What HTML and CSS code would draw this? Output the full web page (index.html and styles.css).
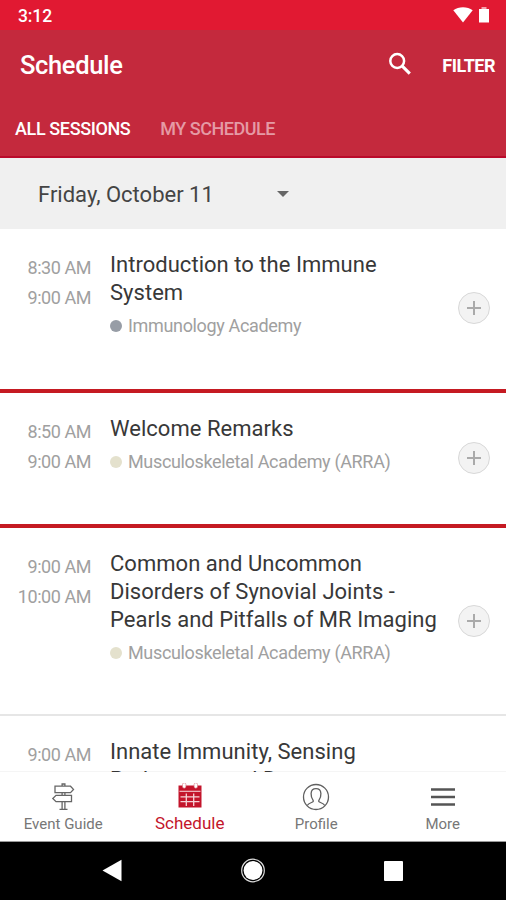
FILE: index.html
```html
<!DOCTYPE html>
<html lang="en">
<head>
<meta charset="utf-8">
<title>Schedule</title>
<link rel="stylesheet" href="styles.css">
</head>
<body>
<div class="status">
  <span class="clock">3:12</span>
  <svg class="wifi" width="20" height="16" viewBox="0 0 20 16"><path d="M.3 3.2C5.5-.8 14.5-.8 19.7 3.2L10 15.5z" fill="#fff"/></svg>
  <svg class="battery" width="10" height="16" viewBox="0 0 10 16"><path d="M2.500 0h5v2h-5z" fill="#f5a3ad"/><path d="M0 2h10v13.500H0z" fill="#fff"/></svg>
</div>
<header class="header">
  <div class="bar">
    <h1 class="heading">Schedule</h1>
    <svg class="search" width="24" height="24" viewBox="0 0 24 24"><circle cx="9.200" cy="9" r="6.900" fill="none" stroke="#fff" stroke-width="2.500"/><path d="M14 13.800l7.800 7.800" stroke="#fff" stroke-width="3.100"/></svg>
    <span class="filter">FILTER</span>
  </div>
  <div class="tabs"><span class="tab tab-on">ALL SESSIONS</span><span class="tab tab-off">MY SCHEDULE</span></div>
</header>
<div class="date"><span class="date-text">Friday, October 11</span><span class="caret"></span></div>
<main class="list">
  <section class="row row-a">
    <div class="times"><span>8:30 AM</span><span>9:00 AM</span></div>
    <div class="info"><h2>Introduction to the Immune<br>System</h2><p><i class="dot gray"></i><span>Immunology Academy</span></p></div>
    <span class="add"></span>
  </section>
  <section class="row row-b">
    <div class="times"><span>8:50 AM</span><span>9:00 AM</span></div>
    <div class="info"><h2>Welcome Remarks</h2><p><i class="dot"></i><span>Musculoskeletal Academy (ARRA)</span></p></div>
    <span class="add"></span>
  </section>
  <section class="row row-c">
    <div class="times"><span>9:00 AM</span><span>10:00 AM</span></div>
    <div class="info"><h2>Common and Uncommon<br>Disorders of Synovial Joints -<br>Pearls and Pitfalls of MR Imaging</h2><p><i class="dot"></i><span>Musculoskeletal Academy (ARRA)</span></p></div>
    <span class="add"></span>
  </section>
  <section class="row row-d">
    <div class="times"><span>9:00 AM</span></div>
    <div class="info"><h2>Innate Immunity, Sensing<br>Pathogens and D</h2></div>
  </section>
</main>
<nav class="nav">
  <div class="item">
    <svg width="28" height="28" viewBox="0 0 28 28" fill="none" stroke="#666" stroke-width="1.300"><path d="M6 3.200h15.500l3 3.200-3 3.200H6zM22.500 12.300H7L3.800 15.500l3.200 3.200h15.500zM13.100 3V1h2.800v2M13.100 9.600v2.700M15.900 9.600v2.700M13.100 18.700v7.500M15.900 18.700v7.500M10.500 26.400h8"/></svg>
    <span>Event Guide</span>
  </div>
  <div class="item active">
    <svg width="28" height="28" viewBox="0 0 28 28"><path d="M2.500 2.500h23v22h-23z" fill="#c3142b"/><path d="M3.500 8.300h21" stroke="#f4ccd1" stroke-width="1.100"/><path d="M4.500 13.900h19M4.500 18.700h19M10.300 10.500v12.500M17.700 10.500v12.500" stroke="#f6d3d8" stroke-width="1.300"/><path d="M6.500 1.500a1.700 1.700 0 0 1 3.400 0v2a1.700 1.700 0 0 1-3.400 0zM18.100 1.500a1.700 1.700 0 0 1 3.400 0v2a1.700 1.700 0 0 1-3.400 0z" fill="#fff" stroke="#dc7582" stroke-width=".6"/></svg>
    <span>Schedule</span>
  </div>
  <div class="item">
    <svg width="28" height="28" viewBox="0 0 28 28" fill="none" stroke="#606060" stroke-width="1.300"><circle cx="14" cy="14" r="12.500"/><path d="M5.200 22.500c1-1.800 2.300-2.300 4.300-3 1.600-.6 2.200-1.200 1.600-2.200C9.300 15 9 12.700 9.100 10.500 9.300 7.300 11 5.700 14 5.700s4.700 1.600 4.900 4.800c.1 2.200-.2 4.500-2 6.800-.6 1 0 1.600 1.600 2.200 2 .7 3.300 1.200 4.300 3"/></svg>
    <span>Profile</span>
  </div>
  <div class="item">
    <svg width="28" height="28" viewBox="0 0 28 28"><path d="M2 6.500h24M2 14h24M2 21.500h24" stroke="#555" stroke-width="2.500"/></svg>
    <span>More</span>
  </div>
</nav>
<div class="system">
  <svg width="506" height="58" viewBox="0 0 506 58"><path d="M102.500 28.500L121.500 17.800v21.400z" fill="#fff"/><circle cx="253" cy="28.500" r="11.300" fill="none" stroke="#ddd" stroke-width="1.200"/><circle cx="253" cy="28.500" r="9.400" fill="#fff"/><rect x="384" y="19" width="19" height="20" rx="1" fill="#fff"/></svg>
</div>
</body>
</html>
```
FILE: styles.css
```css
* { box-sizing: border-box; }
body { margin: 0; width: 506px; height: 900px; overflow: hidden; background: #fff; font-family: Roboto, "Liberation Sans", sans-serif; display: flex; flex-direction: column; }
h1, h2, p { margin: 0; font-weight: 400; }
svg { display: block; flex: none; }
.status { height: 30px; flex: none; background: #e11932; display: flex; align-items: center; padding: 0 17px 0 18px; color: #fff; }
.clock { font-size: 17.500px; font-weight: 500; line-height: 30px; letter-spacing: -.1px; margin: 2px auto 0 0; }
.wifi { margin-right: 6px; }
.header { height: 128px; flex: none; background: #c4293d; border-bottom: 2px solid #ba0a2b; color: #fff; }
.bar { display: flex; align-items: center; height: 70px; padding: 0 11px 0 20px; }
.heading { font-size: 25.500px; font-weight: 500; letter-spacing: -.35px; margin: 0 auto 0 0; }
.search { margin: -2px 30px 0 0; }
.filter { font-size: 18px; font-weight: 700; letter-spacing: -.5px; }
.tabs { display: flex; gap: 30px; padding-left: 15px; line-height: 58px; font-size: 18px; font-weight: 500; letter-spacing: -.38px; }
.tab-off { color: #e59aa5; letter-spacing: -.48px; }
.date { height: 71px; flex: none; background: #f0f0f0; display: flex; align-items: center; padding-left: 38px; }
.date-text { width: 239px; margin-top: 1px; font-size: 22px; letter-spacing: 0; color: #444; }
.caret { border: 6px solid transparent; border-top-color: #666; border-bottom: 0; }
.list { height: 543px; flex: none; overflow: hidden; }
.row { display: flex; align-items: flex-start; }
.row-a { height: 164px; padding-top: 22px; border-bottom: 4px solid #c51a22; }
.row-b { height: 135px; padding-top: 22px; border-bottom: 4px solid #c51a22; }
.row-c { height: 188px; padding-top: 22px; border-bottom: 2px solid #e6e6e6; }
.row-d { height: 120px; padding-top: 22px; }
.times { width: 91px; display: flex; flex-direction: column; text-align: right; font-size: 18px; letter-spacing: -.45px; line-height: 30px; color: #a0a0a0; padding-top: 2px; }
.info { margin-left: 19px; width: 348px; white-space: nowrap; }
.info h2 { font-size: 22px; line-height: 28px; letter-spacing: .03px; color: #383838; }
.info p { display: flex; align-items: center; gap: 6px; height: 37px; font-size: 18px; letter-spacing: -.34px; color: #a0a0a0; }
.dot { width: 12px; height: 12px; border-radius: 50%; background: #e4e1cd; }
.gray { background: #979da6; }
.add { width: 32px; height: 32px; margin-top: 41px; border: 1.500px solid #d8d8d8; border-radius: 50%; background: linear-gradient(#aaa, #aaa) center / 14px 2px no-repeat, linear-gradient(#aaa, #aaa) center / 2px 14px no-repeat, #f3f3f3; }
.row-b .add { margin-top: 27px; }
.row-c .add { margin-top: 55px; }
.nav { height: 70px; flex: none; background: #fff; border-bottom: 1px solid #999; box-shadow: 0 -1px rgba(0, 0, 0, .04); display: flex; }
.item { flex: 1; display: flex; flex-direction: column; align-items: center; padding-top: 11px; color: #777; font-size: 15px; line-height: 18px; }
.item span { margin-top: 4px; }
.active { color: #c3142b; font-size: 17px; }
.active span { margin-top: 3px; }
.system { flex: 1; background: #000; }
```
